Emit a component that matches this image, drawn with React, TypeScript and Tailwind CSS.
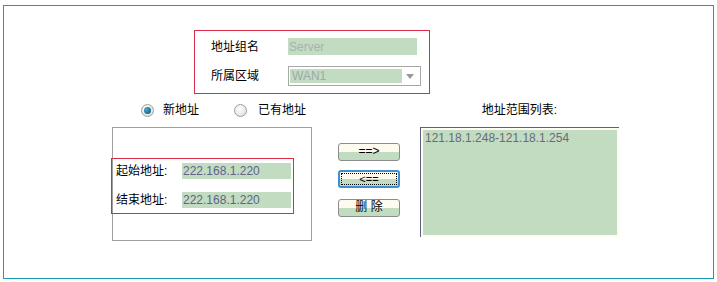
const font = { fontFamily: '"Liberation Sans", "Noto Sans CJK SC", sans-serif' }

function Radio({ checked }: { checked?: boolean }) {
  return (
    <span className="flex h-[13px] w-[13px] items-center justify-center rounded-full border border-[#9aa0a0] bg-[radial-gradient(circle_at_40%_35%,#ffffff,#d6dcd6)]">
      {checked && (
        <span className="h-[7px] w-[7px] rounded-full bg-[radial-gradient(circle_at_35%_35%,#4aa8d8,#0a4a70)]" />
      )}
    </span>
  )
}

function Btn({ label, focused }: { label: string; focused?: boolean }) {
  return (
    <div
      className={
        focused
          ? 'flex h-[18px] w-[62px] items-center justify-center rounded-[3px] border-2 border-[#3d8fd1] bg-[linear-gradient(to_bottom,#fffaf0_50%,#c2dcc2_50%)] p-[1px]'
          : 'flex h-[18px] w-[62px] items-center justify-center rounded-[3px] border border-[#8c8c8c] bg-[linear-gradient(to_bottom,#fffaf0_50%,#c2dcc2_50%)]'
      }
    >
      {focused ? (
        <span className="flex h-full w-full items-start justify-center border border-dotted border-black text-[11px] leading-[11px] text-black">
          {label}
        </span>
      ) : (
        <span className="-mt-[3px] text-[12px] leading-[12px] text-black">{label}</span>
      )}
    </div>
  )
}

export default function App() {
  return (
    <div className="h-[282px] w-[717px] bg-white pl-[3px] pt-[5px]" style={font}>
      <div className="h-[274px] w-[711px] border border-[#1a9bb5] text-[12px] text-black">
        {/* group name + zone */}
        <div className="ml-[190px] mt-[24px] h-[64px] w-[236px] border border-[#dc2a4a] pl-[16px] pt-[7px]">
          <div className="flex h-[17px] items-center">
            <span className="w-[77px]">地址组名</span>
            <div className="flex h-[17px] w-[129px] items-center bg-[#c1dcc1] pl-[1px] text-[#a8b0b2]">
              Server
            </div>
          </div>
          <div className="mt-[11px] flex h-[20px] items-center">
            <span className="w-[77px]">所属区域</span>
            <div className="flex h-[20px] w-[133px] items-center border border-[#a8a8a8] bg-white px-[1px]">
              <div className="flex h-[14px] w-[112px] items-center bg-[#c1dcc1] pl-[2px] text-[#a0a8ac]">
                WAN1
              </div>
              <svg width="8" height="5" viewBox="0 0 8 5" className="ml-[4px]">
                <path d="M0 0H8L4 5Z" fill="#9a9a9a" />
              </svg>
            </div>
          </div>
        </div>

        <div className="ml-[108px] mt-[6px] flex items-start">
          {/* left column */}
          <div className="w-[200px]">
            <div className="flex h-[20px] items-center pl-[29px]">
              <Radio checked />
              <span className="ml-[9px]">新地址</span>
              <span className="ml-[35px]">
                <Radio />
              </span>
              <span className="ml-[11px]">已有地址</span>
            </div>
            <div className="mt-[7px] h-[114px] w-[200px] border border-[#a0a0a0] pt-[30px]">
              <div className="-ml-[2px] h-[56px] w-[183px] border border-[#dc2a4a] pl-[4px] pt-[4px]">
                <div className="flex h-[16px] items-center">
                  <span className="w-[66px]">起始地址:</span>
                  <div className="flex h-[16px] w-[109px] items-center bg-[#c1dcc1] pl-[1px] text-[#62628a]">
                    222.168.1.220
                  </div>
                </div>
                <div className="mt-[13px] flex h-[16px] items-center">
                  <span className="w-[66px]">结束地址:</span>
                  <div className="flex h-[16px] w-[109px] items-center bg-[#c1dcc1] pl-[1px] text-[#62628a]">
                    222.168.1.220
                  </div>
                </div>
              </div>
            </div>
          </div>

          {/* buttons */}
          <div className="ml-[26px] flex flex-col gap-[9px] pt-[43px]">
            <Btn label="==>" />
            <Btn label="<==" focused />
            <div className="mt-[2px]">
              <Btn label="删 除" />
            </div>
          </div>

          {/* list */}
          <div className="ml-[20px] w-[199px]">
            <div className="flex h-[20px] items-center justify-center">地址范围列表:</div>
            <div className="mt-[7px] h-[110px] w-[199px] border-l border-t border-[#5e5e7e] bg-[#fffcf4] p-[2px]">
              <div className="h-full w-full bg-[#c1dcc1] pl-[2px] pt-[1px] leading-[14px] text-[#6a6a7a]">
                121.18.1.248-121.18.1.254
              </div>
            </div>
          </div>
        </div>
      </div>
    </div>
  )
}
